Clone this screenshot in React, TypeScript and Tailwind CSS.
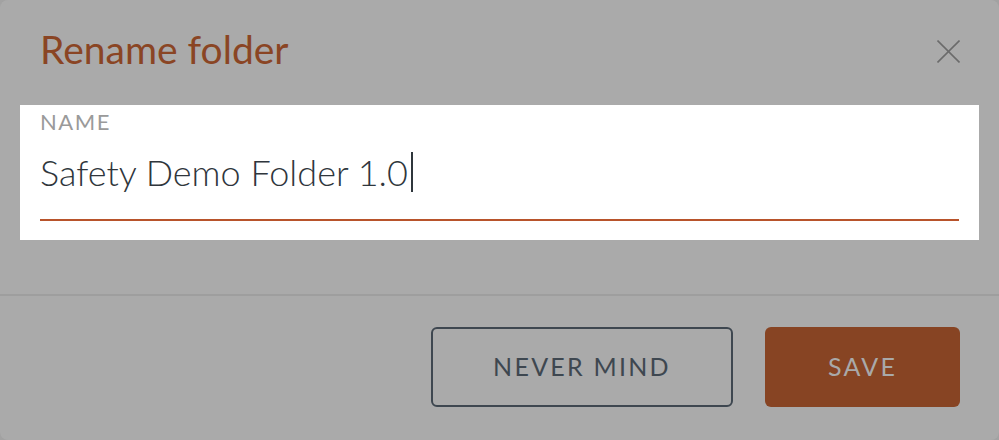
export default function App() {
  return (
    <div className="w-[999px] h-[440px] bg-[#a2a2a2] font-['Lato',sans-serif]">
      <div className="w-full h-full bg-[#aaaaaa] rounded-[8px] flex flex-col">
        <div className="flex items-start justify-between pl-[40px] pr-[39px] pt-[30px] h-[105px]">
          <h2 className="text-[39px] leading-[39px] text-[#8a4524]">Rename folder</h2>
          <button className="mt-[10px] text-[#6b6b6b]">
            <svg width="23" height="23" viewBox="0 0 23 23" fill="none" stroke="currentColor" strokeWidth="1.6">
              <line x1="0.5" y1="0.5" x2="22.5" y2="22.5" />
              <line x1="22.5" y1="0.5" x2="0.5" y2="22.5" />
            </svg>
          </button>
        </div>
        <div className="mx-[20px] bg-white h-[135px] px-[20px] pt-[6px]">
          <div className="text-[22px] leading-[22px] tracking-[0.07em] text-[#9a9a9a]">NAME</div>
          <div className="mt-[19px] h-[40px] flex items-center text-[36px] leading-[36px] font-light text-[#2f363c]">
            <span>Safety Demo Folder 1.0</span>
            <span className="ml-[3px] w-[2px] h-[40px] bg-[#2f363c]" />
          </div>
          <div className="mt-[27px] h-[2px] bg-[#b8532b]" />
        </div>
        <div className="h-[54px]" />
        <div className="h-[2px] bg-[#9e9e9e]" />
        <div className="flex justify-end gap-[32px] pr-[39px] pt-[31px]">
          <button className="w-[302px] h-[80px] rounded-[6px] border-2 border-[#3e4750] text-[#3e4750] text-[25px] tracking-[0.09em]">
            NEVER MIND
          </button>
          <button className="w-[195px] h-[80px] rounded-[6px] bg-[#874423] text-[#a9a9a9] text-[25px] tracking-[0.09em]">
            SAVE
          </button>
        </div>
      </div>
    </div>
  );
}
